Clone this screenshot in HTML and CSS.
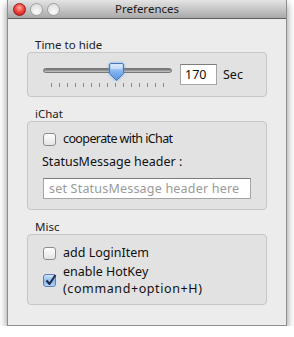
FILE: index.html
```html
<!DOCTYPE html>
<html lang="en">
<head>
    <meta charset="UTF-8">
    <title>Preferences</title>
    <link rel="stylesheet" href="styles.css">
</head>
<body>
    <div class="window">
        <div class="titlebar">
            <div class="lights">
                <span class="light red"></span>
                <span class="light"></span>
                <span class="light"></span>
            </div>
            <div class="title">Preferences</div>
        </div>
        <div class="content">
            <div class="group">
                <div class="group-label">Time to hide</div>
                <div class="group-box slider-box">
                    <div class="slider">
                        <div class="track"></div>
                        <svg class="knob" width="17" height="20" viewBox="0 0 17 20">
                            <defs>
                                <linearGradient id="kg" x1="0" y1="0" x2="0" y2="1">
                                    <stop offset="0" stop-color="#d6e8fb"/>
                                    <stop offset="0.5" stop-color="#7fb1ee"/>
                                    <stop offset="1" stop-color="#5b95e0"/>
                                </linearGradient>
                            </defs>
                            <path d="M3 1.5 H14 Q15.5 1.5 15.5 3 V11.5 L8.5 18.5 L1.5 11.5 V3 Q1.5 1.5 3 1.5 Z" fill="url(#kg)" stroke="#4a78b8" stroke-width="1"/>
                            <path d="M3 2.5 H14 V7 H3 Z" fill="#ffffff" opacity="0.35"/>
                        </svg>
                        <div class="ticks">
                            <i></i><i></i><i></i><i></i><i></i><i></i><i></i><i></i>
                            <i></i><i></i><i></i><i></i><i></i><i></i><i></i>
                        </div>
                    </div>
                    <div class="num-field">170</div>
                    <span class="unit">Sec</span>
                </div>
            </div>

            <div class="group">
                <div class="group-label">iChat</div>
                <div class="group-box ichat-box">
                    <label class="check-row">
                        <span class="checkbox"></span>
                        <span class="narrow">cooperate with iChat</span>
                    </label>
                    <div class="field-label">StatusMessage header :</div>
                    <div class="text-field">set StatusMessage header here</div>
                </div>
            </div>

            <div class="group">
                <div class="group-label">Misc</div>
                <div class="group-box misc-box">
                    <label class="check-row">
                        <span class="checkbox"></span>
                        <span>add LoginItem</span>
                    </label>
                    <label class="check-row two-lines">
                        <span class="checkbox checked">
                            <svg width="13" height="13" viewBox="0 0 13 13">
                                <path d="M2.5 6.5 L5.5 10 L11.5 1" fill="none" stroke="#1c2a4a" stroke-width="2" stroke-linejoin="round"/>
                            </svg>
                        </span>
                        <span>enable HotKey<br><span class="wide">(command+option+H)</span></span>
                    </label>
                </div>
            </div>
        </div>
    </div>
</body>
</html>
```

FILE: styles.css
```css
* {
    box-sizing: border-box;
}

body {
    margin: 0;
    background-color: #fff;
    font-family: "Noto Sans", "DejaVu Sans", sans-serif;
    font-size: 12.5px;
    color: #111;
}

.window {
    width: 280px;
    height: 326px;
    margin-left: 7px;
    background-color: #ececec;
    border: 1px solid #8e8e8e;
    border-top: none;
    box-shadow: 0 4px 8px rgba(0, 0, 0, 0.45);
}

.titlebar {
    display: grid;
    grid-template-columns: 1fr auto 1fr;
    align-items: center;
    height: 19px;
    background: linear-gradient(#e4e4e4, #a9a9a9);
    border-bottom: 1px solid #5e5e5e;
}

.lights {
    display: flex;
    gap: 4px;
    padding-left: 5px;
}

.light {
    width: 13px;
    height: 13px;
    border-radius: 50%;
    border: 1px solid #a0a0a0;
    background: radial-gradient(circle at 50% 70%, #fafafa, #d8d8d8);
}

.light.red {
    border-color: #9b1a1a;
    background: radial-gradient(circle at 50% 35%, #ffb0a8 0, #f04a40 45%, #b3100c 100%);
}

.title {
    font-size: 11.5px;
    line-height: 18px;
    color: #1a1a1a;
}

.content {
    padding: 19px 19px 0;
}

.group-label {
    font-size: 11.5px;
    line-height: 14px;
    padding-left: 8px;
    color: #222;
}

.group + .group {
    margin-top: 10px;
}

.group-box {
    background-color: #e2e2e2;
    border: 1px solid #c6c6c6;
    border-radius: 4px;
}

.slider-box {
    height: 45px;
    display: flex;
    align-items: center;
    padding-left: 15px;
}

.slider {
    position: relative;
    width: 129px;
    height: 24px;
    margin-right: 8px;
}

.track {
    position: absolute;
    left: 0;
    right: 0;
    top: 5px;
    height: 5px;
    border-radius: 3px;
    background: linear-gradient(#6d6d6d, #a3a3a3 60%, #c8c8c8);
    border: 1px solid #777;
}

.knob {
    position: absolute;
    left: 65px;
    top: -1px;
    filter: drop-shadow(0 0 1.5px rgba(90, 150, 230, 0.8));
}

.ticks {
    position: absolute;
    left: 8px;
    right: 8px;
    top: 20px;
    display: flex;
    justify-content: space-between;
}

.ticks i {
    width: 1px;
    height: 4px;
    background-color: #8a8a8a;
}

.num-field {
    width: 37px;
    height: 21px;
    line-height: 19px;
    padding-left: 4px;
    background-color: #fff;
    border: 1px solid #a5a5a5;
    border-top-color: #7c7c7c;
}

.unit {
    margin-left: 6px;
}

.ichat-box {
    height: 89px;
    padding: 9px 15px 0;
}

.check-row {
    display: flex;
    align-items: center;
    gap: 7px;
    line-height: 16px;
}

.narrow {
    letter-spacing: -0.6px;
}

.wide {
    letter-spacing: 0.6px;
}

.checkbox {
    width: 13px;
    height: 13px;
    flex-shrink: 0;
    border: 1px solid #8c8c8c;
    border-radius: 3px;
    background: linear-gradient(#ffffff, #e4e4e4);
    position: relative;
}

.checkbox.checked {
    border-color: #5b7fb6;
    background: linear-gradient(#d2e4fb, #89b6ee 55%, #b8d4f6);
}

.checkbox svg {
    position: absolute;
    left: 0;
    top: -1px;
}

.field-label {
    line-height: 16px;
    margin-top: 7px;
    margin-left: -1px;
}

.text-field {
    margin-top: 8px;
    height: 21px;
    line-height: 19px;
    padding-left: 5px;
    background-color: #fff;
    border: 1px solid #a5a5a5;
    border-top-color: #7c7c7c;
    color: #9a9a9a;
    letter-spacing: 0.2px;
    white-space: nowrap;
    overflow: hidden;
}

.misc-box {
    height: 71px;
    padding: 10px 15px 0;
}

.two-lines {
    margin-top: 2px;
    line-height: 17px;
}
```
